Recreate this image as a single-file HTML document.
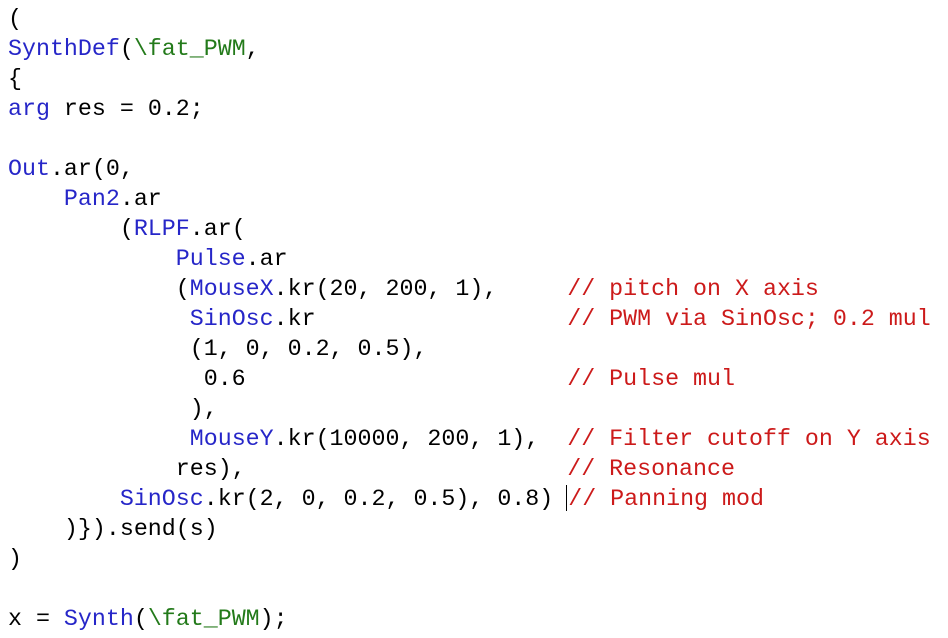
<!DOCTYPE html>
<html><head><meta charset="utf-8"><style>
html,body{margin:0;padding:0;background:#fff;width:948px;height:638px;overflow:hidden}
pre{margin:0;position:absolute;left:8px;top:4px;font-family:"Liberation Mono","DejaVu Sans Mono",monospace;font-size:23.3px;line-height:30px;color:#000}
.b{color:#2626c8}.g{color:#237a1a}.r{color:#cc1a1a}
.cur{display:inline-block;width:0;border-left:1.5px solid #000;height:26px;vertical-align:-6px;margin-left:-1px;margin-right:1px}
</style></head><body><pre>(
<span class="b">SynthDef</span>(<span class="g">\fat_PWM</span>,
{
<span class="b">arg</span> res = 0.2;

<span class="b">Out</span>.ar(0,
    <span class="b">Pan2</span>.ar
        (<span class="b">RLPF</span>.ar(
            <span class="b">Pulse</span>.ar
            (<span class="b">MouseX</span>.kr(20, 200, 1),     <span class="r">// pitch on X axis</span>
             <span class="b">SinOsc</span>.kr                  <span class="r">// PWM via SinOsc; 0.2 mul</span>
             (1, 0, 0.2, 0.5),
              0.6                       <span class="r">// Pulse mul</span>
             ),
             <span class="b">MouseY</span>.kr(10000, 200, 1),  <span class="r">// Filter cutoff on Y axis</span>
            res),                       <span class="r">// Resonance</span>
        <span class="b">SinOsc</span>.kr(2, 0, 0.2, 0.5), 0.8) <span class="cur"></span><span class="r">// Panning mod</span>
    )}).send(s)
)

x = <span class="b">Synth</span>(<span class="g">\fat_PWM</span>);</pre></body></html>
